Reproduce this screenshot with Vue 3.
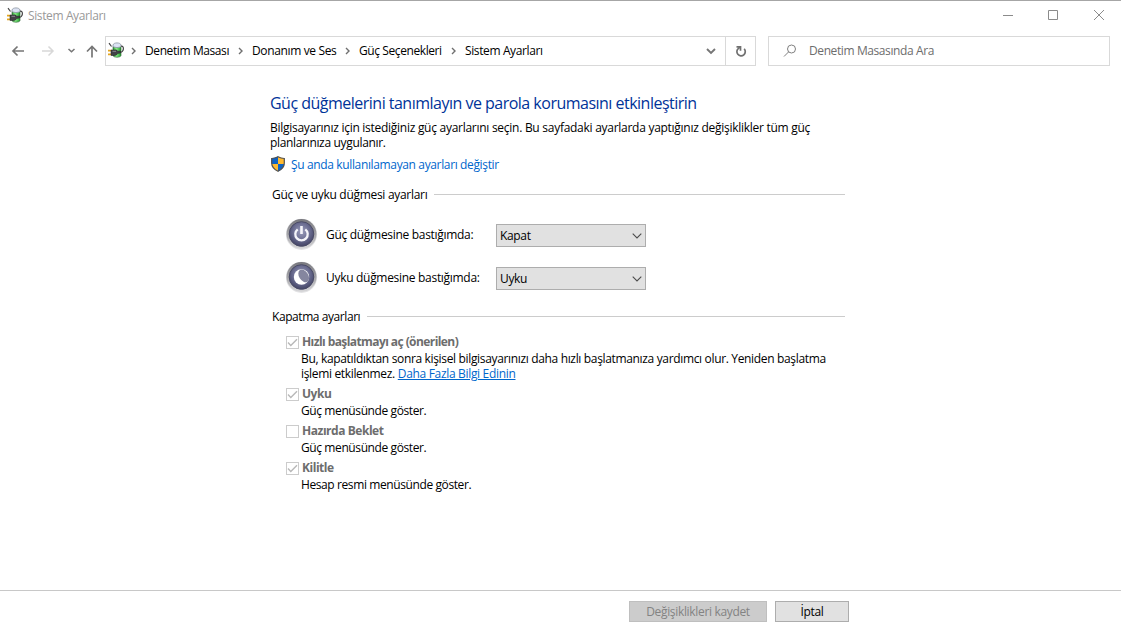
<script setup>
const crumbs = [
  { text: 'Denetim Masası', cls: 'c1' },
  { text: 'Donanım ve Ses', cls: 'c2' },
  { text: 'Güç Seçenekleri', cls: 'c3' },
  { text: 'Sistem Ayarları', cls: 'c4' },
]
const buttons = [
  { kind: 'power', label: 'Güç düğmesine bastığımda:', value: 'Kapat' },
  { kind: 'sleep', label: 'Uyku düğmesine bastığımda:', value: 'Uyku' },
]
const options = [
  {
    title: 'Hızlı başlatmayı aç (önerilen)', on: true, cls: 'o1',
    lines: ['Bu, kapatıldıktan sonra kişisel bilgisayarınızı daha hızlı başlatmanıza yardımcı olur. Yeniden başlatma', 'işlemi etkilenmez.'],
    link: 'Daha Fazla Bilgi Edinin',
  },
  { title: 'Uyku', on: true, cls: 'o2', lines: ['Güç menüsünde göster.'] },
  { title: 'Hazırda Beklet', on: false, cls: 'o3', lines: ['Güç menüsünde göster.'] },
  { title: 'Kilitle', on: true, cls: 'o4', lines: ['Hesap resmi menüsünde göster.'] },
]
</script>

<template>
  <div class="window">
    <svg class="defs" width="0" height="0">
      <defs>
        <linearGradient id="cell" x1="0" x2="1">
          <stop offset="0" stop-color="#26962f" /><stop offset=".4" stop-color="#8cf08a" /><stop offset="1" stop-color="#1f9a2c" />
        </linearGradient>
        <linearGradient id="rim" x1="0" y1="0" x2="0" y2="1">
          <stop offset="0" stop-color="#77777d" /><stop offset=".5" stop-color="#a4a4a8" /><stop offset="1" stop-color="#d8d8da" />
        </linearGradient>
        <radialGradient id="orb" cx=".5" cy=".4" r=".65">
          <stop offset="0" stop-color="#9c9ebd" /><stop offset=".55" stop-color="#686a8e" /><stop offset="1" stop-color="#3a3b5c" />
        </radialGradient>
        <symbol id="battery" viewBox="0 0 16 16">
          <path d="M5 4.500V13.500C5.500 15.800 12.500 15.800 13 13.500V4.500Z" fill="url(#cell)" stroke="#2b5c31" stroke-width=".6" />
          <path d="M5 4.800V3C5.500 .2 12.500.2 13 3V4.800Q9 6.500 5 4.800" fill="#dce3f4" stroke="#7c8694" stroke-width=".7" />
          <path d="M1 1.200 3.500 4.500M13 4.200Q16 4 15.200 8Q14.500 10 12.500 10.500" fill="none" stroke="#454545" stroke-width="1.200" />
          <path d="M0 8.700H3.500M0 12.300H3.500" stroke="#e3a51d" stroke-width="1.700" />
          <path d="M3 8H6Q9.300 7.300 9.500 9.300L12.500 9V11L9.500 11.500Q9 13.500 6.500 13.500H3Z" fill="#424246" stroke="#202024" stroke-width=".5" />
          <path d="M4.500 9.300H8" stroke="#898a91" stroke-width="1" />
        </symbol>
      </defs>
    </svg>

    <header class="titlebar">
      <svg class="app-icon" width="16" height="16"><use href="#battery" /></svg>
      <span class="title">Sistem Ayarları</span>
      <svg class="caption" width="104" height="14" fill="none" stroke="#8b8b8b">
        <path d="M1 7.500H11M46.500 2.500H55.500V11.500H46.500ZM92 2 102 12M102 2 92 12" />
      </svg>
    </header>

    <nav class="navbar">
      <svg class="arrows" width="105" height="30" fill="none">
        <path d="M24 15H13M17.500 10.500 13 15 17.500 19.500" stroke="#767676" stroke-width="1.700" />
        <path d="M42 15H53M48.500 10.500 53 15 48.500 19.500" stroke="#d8d8d8" stroke-width="1.500" />
        <path d="M68.500 13 71.500 15.800 74.500 13" stroke="#777" stroke-width="1.500" />
        <path d="M92 21.500V10.500M87 15.500 92 10.500 97 15.500" stroke="#767676" stroke-width="1.700" />
      </svg>
      <div class="address">
        <svg class="addr-icon" width="16" height="16"><use href="#battery" /></svg>
        <template v-for="c in crumbs" :key="c.text">
          <svg class="sep" width="6" height="8" fill="none" stroke="#6f6f6f" stroke-width="1.400"><path d="M1 1 4 4 1 7" /></svg>
          <span class="crumb" :class="c.cls">{{ c.text }}</span>
        </template>
        <svg class="drop" width="12" height="8" fill="none" stroke="#767676" stroke-width="1.900"><path d="M2 2 6 6 10 2" /></svg>
        <div class="refresh">
          <svg width="14" height="14" fill="none" stroke="#707070" stroke-width="1.700">
            <path d="M10.200 4.800A4.200 4.200 0 1 1 4.500 4.300L6 3" /><path d="M2.500 2.800H6.500V6.800" />
          </svg>
        </div>
      </div>
      <div class="search">
        <svg width="14" height="14" fill="none" stroke="#808080" stroke-width="1"><circle cx="8.500" cy="5" r="4" /><path d="M5.700 7.800 1 12.500" /></svg>
        <span>Denetim Masasında Ara</span>
      </div>
    </nav>

    <main>
      <h1><span>Güç düğmelerini tanımlayın ve parola korumasını etkinleştirin</span></h1>
      <p class="intro">
        <span class="i1">Bilgisayarınız için istediğiniz güç ayarlarını seçin. Bu sayfadaki ayarlarda yaptığınız değişiklikler tüm güç</span><br />
        <span class="i2">planlarınıza uygulanır.</span>
      </p>
      <a class="elevate">
        <svg width="16" height="16" viewBox="0 0 16 16">
          <path d="M8 .5Q11 2.300 14.500 2.300V7Q14.500 12.500 8 15.500Q1.500 12.500 1.500 7V2.300Q5 2.300 8 .5Z" fill="#ffba2f" />
          <path d="M8 .5V8H1.500V2.300Q5 2.300 8 .5ZM8 8H14.400Q13.800 12.800 8 15.500Z" fill="#0d63c5" />
          <path d="M8 .8Q11 2.500 14.300 2.500V7Q14.300 12.300 8 15.200Q1.700 12.300 1.700 7V2.500Q5 2.500 8 .8Z" fill="none" stroke="#505257" stroke-width="1.200" />
        </svg>
        <span>Şu anda kullanılamayan ayarları değiştir</span>
      </a>

      <section class="buttons">
        <h2><span class="g1">Güç ve uyku düğmesi ayarları</span></h2>
        <div v-for="b in buttons" :key="b.kind" class="setting" :class="b.kind">
          <svg width="32" height="32" viewBox="0 0 32 32">
            <circle cx="15.500" cy="16.300" r="15.600" fill="#e3e3e5" />
            <circle cx="15.500" cy="16" r="15" fill="url(#rim)" />
            <circle cx="15.500" cy="16" r="12.300" fill="url(#orb)" stroke="#4a4b66" stroke-width="1" />
            <template v-if="b.kind === 'power'">
              <path d="M11.700 11.300A6.200 6.200 0 1 0 19.300 11.300" fill="none" stroke="#f5f5fa" stroke-width="2.300" />
              <path d="M15.500 8V16" stroke="#f5f5fa" stroke-width="2.600" />
            </template>
            <template v-else>
              <circle cx="15.500" cy="16" r="7.700" fill="#fff" />
              <ellipse cx="17.700" cy="14.900" rx="4.600" ry="7" transform="rotate(-32 17.700 14.900)" fill="#85869f" />
            </template>
          </svg>
          <span class="label">{{ b.label }}</span>
          <div class="select">
            <span>{{ b.value }}</span>
            <svg width="10" height="6" fill="none" stroke="#4c4c4c" stroke-width="1.100"><path d="M.7.700 5 5 9.300.7" /></svg>
          </div>
        </div>
      </section>

      <section class="shutdown">
        <h2><span class="g2">Kapatma ayarları</span></h2>
        <div v-for="o in options" :key="o.title" class="option" :class="o.cls">
          <div class="check-row">
            <svg width="13" height="13" fill="none"><rect x=".5" y=".5" width="12" height="12" fill="#fff" stroke="#ccc" /><path v-if="o.on" d="M2 6.500 4.800 9.400 11 3.200" stroke="#b8b8b8" stroke-width="1.400" /></svg>
            <strong>{{ o.title }}</strong>
          </div>
          <div class="desc">
            <div v-for="(l, i) in o.lines" :key="i" class="line"><span :class="'l' + i">{{ l }}</span><a v-if="o.link && i === 1">{{ o.link }}</a></div>
          </div>
        </div>
      </section>
    </main>

    <footer>
      <button class="save" disabled><span>Değişiklikleri kaydet</span></button>
      <button class="cancel"><span>İptal</span></button>
    </footer>
  </div>
</template>

<style>
body { background: #fff; overflow: hidden; }
</style>

<style scoped>
* { box-sizing: border-box; }
.window { width: 1121px; height: 633px; display: flex; flex-direction: column; border-top: 1px solid #a6a6a6; background: #fff; color: #000; font: 12px/15px "Open Sans", "Noto Sans", sans-serif; letter-spacing: -.33px; white-space: nowrap; }
.defs { position: absolute; }
svg { flex: none; display: block; }
.titlebar { height: 29px; display: flex; align-items: center; padding-left: 7px; }
.app-icon { margin-bottom: 1px; }
.title { margin-left: 5px; color: #999; letter-spacing: -.38px; }
.caption { margin-left: auto; margin-right: 15px; margin-bottom: 2px; }
.navbar { height: 42px; padding-top: 6px; display: flex; }
.address { width: 651px; height: 30px; border: 1px solid #d9d9d9; display: flex; align-items: center; padding-left: 2px; }
.addr-icon { margin-bottom: 2px; }
.sep { margin-left: 8px; }
.addr-icon + .sep { margin-left: 7px; }
.crumb { width: 85px; margin-left: 8px; padding-bottom: 1px; letter-spacing: -.4px; }
.c2 { width: 85px; letter-spacing: -.36px; }
.c3 { width: 84px; letter-spacing: -.41px; }
.c4 { width: 80px; letter-spacing: -.38px; }
.drop { margin-left: auto; margin-right: 8px; }
.refresh { width: 30px; height: 28px; border-left: 1px solid #d9d9d9; display: flex; align-items: center; justify-content: center; }
.search { width: 342px; height: 30px; margin-left: 12px; border: 1px solid #d9d9d9; display: flex; align-items: center; padding-left: 14px; color: #6d6d6d; }
.search span { margin-left: 12px; padding-bottom: 1px; letter-spacing: -.4px; }
main { flex: 1; padding: 19px 0 0 270px; }
h1 { margin: 0; height: 24px; font-size: 16px; line-height: 24px; font-weight: 400; letter-spacing: -.51px; color: #003399; }
.intro { margin: 5px 0 6px; height: 30px; }
.i1 { letter-spacing: -.272px; }
.elevate { display: flex; align-items: center; height: 16px; color: #0066cc; letter-spacing: -.36px; }
.elevate span { margin-left: 5px; }
h2 { margin: 14px 0 0 2px; width: 573px; height: 16px; display: flex; align-items: center; font-size: 12px; line-height: 15px; font-weight: 400; }
.g1 { letter-spacing: -.3px; }
.g2 { letter-spacing: -.43px; }
h2::after { content: ""; flex: 1; height: 1px; margin-left: 7px; background: #ccc; }
.setting { height: 32px; margin: 16px 0 0 16px; display: flex; align-items: center; }
.setting + .setting { margin-top: 11px; }
.label { width: 170px; margin-left: 8px; letter-spacing: -.3px; }
.select { width: 150px; height: 23px; margin-top: 3px; padding: 0 3px; display: flex; align-items: center; justify-content: space-between; border: 1px solid #adadad; background: #e1e1e1; }
.shutdown h2 { margin-top: 15px; }
.option { margin-left: 16px; padding-top: 5px; }
.option.o1 { padding-top: 10px; }
.check-row { height: 16px; display: flex; align-items: center; color: #6d6d6d; }
.check-row strong { margin-left: 3px; padding-bottom: 1px; font-weight: 700; letter-spacing: -.46px; }
.o1 strong { letter-spacing: -.58px; }
.desc { padding: 1px 0 0 15px; }
.line { height: 15px; letter-spacing: -.4px; }
.o1 .l0, .o1 .l1 { letter-spacing: -.34px; }
.line a { margin-left: 3px; color: #0066cc; text-decoration: underline; letter-spacing: -.32px; }
footer { height: 43px; border-top: 1px solid #c8c8c8; padding: 10px 0 0 629px; display: flex; gap: 8px; }
button { height: 21px; padding: 0; font: inherit; letter-spacing: inherit; border: 1px solid #adadad; background: #e1e1e1; color: #000; }
button span { display: block; padding-bottom: 1px; }
.save { width: 138px; color: #838383; background: #ccc; border-color: #bfbfbf; }
.cancel { width: 74px; }
</style>
